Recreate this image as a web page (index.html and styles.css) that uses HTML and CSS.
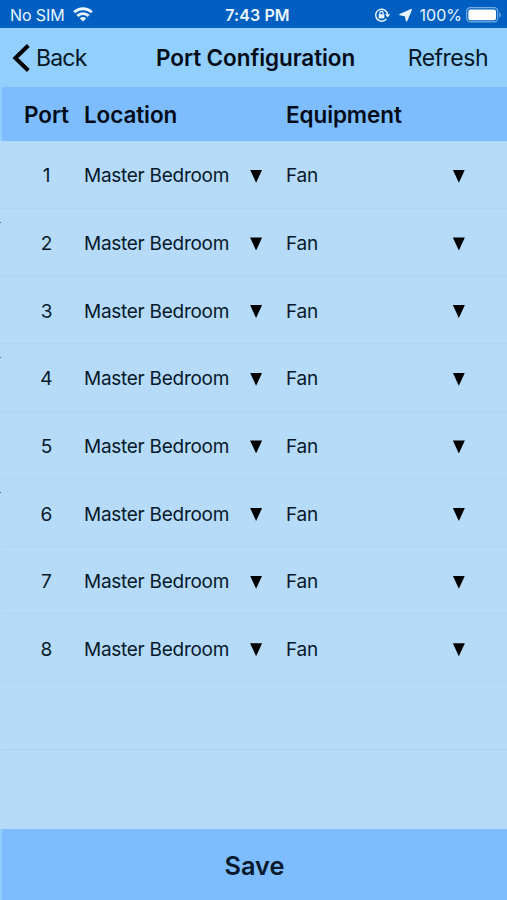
FILE: index.html
```
<!DOCTYPE html>
<html lang="en">
<head>
<meta charset="utf-8">
<title>Port Configuration</title>
<link rel="stylesheet" href="styles.css">
</head>
<body>
<div class="screen">
  <div class="status">
    <div class="status-left"><span class="carrier">No SIM</span>
      <svg class="wifi" width="20" height="15" viewBox="0 0 20 15"><g fill="none" stroke="currentColor" stroke-width="2.9"><path d="M1.2 5.3C6.2.5 13.8.5 18.8 5.3"/><path d="M4.3 8.9c3.3-3.1 8.1-3.1 11.4 0"/></g><path d="M6.7 11.2c2-1.7 4.6-1.7 6.6 0L10 14.4z" fill="currentColor"/></svg>
    </div>
    <span class="time">7:43 PM</span>
    <div class="status-right">
      <svg class="lock" width="17" height="16" viewBox="0 0 17 16"><path d="M12.3 12A6 6 0 1 1 13.6 7.5" fill="none" stroke="currentColor" stroke-width="1.5"/><path d="M11 7.3h5.2l-2.6 3.2z" fill="currentColor"/><path d="M4.7 7.2h5.6v4.2H4.7z" fill="currentColor"/><path d="M5.9 7.4V6a1.6 1.6 0 0 1 3.2 0v1.4" fill="none" stroke="currentColor" stroke-width="1.2"/></svg>
      <svg class="arrow" width="13" height="13" viewBox="0 0 13 13"><path d="M12.2.8 7.6 11.8 6.5 6.8 1 5.6z" fill="currentColor" stroke="currentColor" stroke-width="1.5" stroke-linejoin="round"/></svg>
      <span class="percent">100%</span>
      <svg class="battery" width="36" height="16" viewBox="0 0 36 16"><rect x=".7" y=".7" width="31" height="14.2" rx="3.6" fill="none" stroke="#74aee5" stroke-width="1.2"/><rect x="2.4" y="2.4" width="27.6" height="10.8" rx="2" fill="#fff"/><path d="M33.3 5.4c2 .5 2 4.3 0 4.8z" fill="#74aee5"/></svg>
    </div>
  </div>
  <div class="nav">
    <div class="back"><svg width="19" height="30" viewBox="0 0 19 30"><path d="M16.3 2.5 3.4 15l12.9 12.5" fill="none" stroke="currentColor" stroke-width="4"/></svg><span>Back</span></div>
    <h1 class="title">Port Configuration</h1>
    <span class="refresh">Refresh</span>
  </div>
  <div class="head row"><span class="port">Port</span><span>Location</span><span>Equipment</span></div>
  <div class="list">
    <div class="row"><span class="port">1</span><span class="pick location">Master Bedroom<i class="caret"></i></span><span class="pick equipment">Fan<i class="caret"></i></span></div>
    <div class="row tick"><span class="port">2</span><span class="pick location">Master Bedroom<i class="caret"></i></span><span class="pick equipment">Fan<i class="caret"></i></span></div>
    <div class="row"><span class="port">3</span><span class="pick location">Master Bedroom<i class="caret"></i></span><span class="pick equipment">Fan<i class="caret"></i></span></div>
    <div class="row tick"><span class="port">4</span><span class="pick location">Master Bedroom<i class="caret"></i></span><span class="pick equipment">Fan<i class="caret"></i></span></div>
    <div class="row"><span class="port">5</span><span class="pick location">Master Bedroom<i class="caret"></i></span><span class="pick equipment">Fan<i class="caret"></i></span></div>
    <div class="row tick"><span class="port">6</span><span class="pick location">Master Bedroom<i class="caret"></i></span><span class="pick equipment">Fan<i class="caret"></i></span></div>
    <div class="row"><span class="port">7</span><span class="pick location">Master Bedroom<i class="caret"></i></span><span class="pick equipment">Fan<i class="caret"></i></span></div>
    <div class="row"><span class="port">8</span><span class="pick location">Master Bedroom<i class="caret"></i></span><span class="pick equipment">Fan<i class="caret"></i></span></div>
    <div class="row blank"></div>
  </div>
  <div class="save">Save</div>
</div>
</body>
</html>
```
FILE: styles.css
```
* { box-sizing: border-box; }
body { margin: 0; font-family: Inter, "Liberation Sans", sans-serif; color: #07192b; }
.screen { width: 507px; height: 900px; display: flex; flex-direction: column; background: #b5dbf9; overflow: hidden; white-space: nowrap; }
.status { height: 28px; flex: none; display: grid; grid-template-columns: 1fr auto 1fr; align-items: center; padding: 2px 5px 0 10px; background: #005fc0; color: #e9f6ff; font-size: 16px; }
.status-left, .status-right { display: flex; align-items: center; }
.status-right { justify-content: flex-end; }
.carrier { letter-spacing: -0.1px; }
.wifi { margin-left: 8px; margin-top: -2px; }
.time { font-weight: 600; letter-spacing: 0.1px; padding-left: 3px; }
.arrow { margin-left: 8px; }
.percent { margin-left: 8px; }
.battery { margin-left: 4px; }
.nav { height: 59px; flex: none; display: grid; grid-template-columns: 144px 1fr auto; align-items: center; padding: 1px 19px 0 12px; background: #92cffc; font-size: 23px; color: #051727; }
.back { display: flex; align-items: center; letter-spacing: -0.8px; }
.back svg { color: #000; margin-right: 5px; }
.title { margin: 0 0 2px; font-size: 22.5px; font-weight: 600; letter-spacing: -0.08px; color: #020c18; }
.refresh { letter-spacing: -0.5px; }
.row { display: grid; grid-template-columns: 75px 202px 1fr; align-items: center; padding-left: 9px; position: relative; }
.head { height: 54px; flex: none; background: #7dbdfd; border-left: 2px solid #92cffc; padding-left: 7px; font-size: 22.5px; font-weight: 600; letter-spacing: -0.1px; color: #020c18; }
.port { text-align: center; }
.list { flex: 1; font-size: 19px; }
.list .row { height: 67.65px; border-bottom: 1px solid #b4d2f0; border-left: 2px solid #b5dbf9; padding-left: 7px; padding-top: 3px; }
.list .blank { border-bottom-color: #abcfea; }
.pick { display: flex; align-items: center; letter-spacing: -0.27px; }
.caret { width: 12px; height: 13px; background: #000; clip-path: polygon(0 0, 100% 0, 50% 100%); margin-top: 1px; }
.location .caret { margin-left: 21px; }
.equipment .caret { margin-left: 135px; }
.tick::before { content: ""; position: absolute; left: -2px; top: 13px; width: 1px; height: 1px; background: #49667c; }
.save { height: 71.5px; flex: none; display: flex; align-items: center; justify-content: center; padding-top: 3px; background: #7dbdfd; border-left: 2px solid #92cffc; font-size: 25.3px; font-weight: 600; }
```
